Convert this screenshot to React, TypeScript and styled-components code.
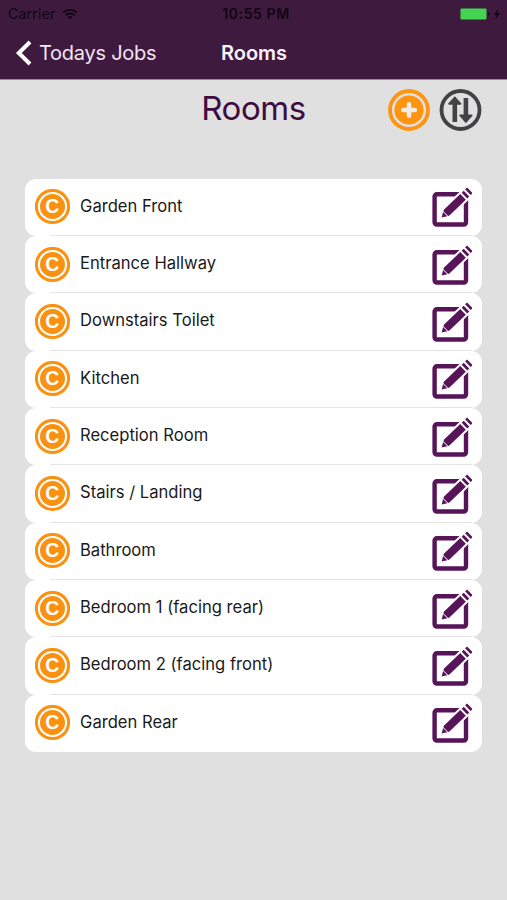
import React from 'react';
import styled, { createGlobalStyle } from 'styled-components';

const GlobalStyle = createGlobalStyle`
  * { box-sizing: border-box; }
  body { margin: 0; background: #e0e0e0; }
  svg { display: block; flex: none; }
`;

const Screen = styled.div`
  width: 507px;
  height: 900px;
  overflow: hidden;
  background: #e0e0e0;
  font-family: Inter, Roboto, sans-serif;
  color: #1a1a1a;
`;

const Header = styled.header`
  height: 80px;
  background: #3d1a3e;
  border-bottom: 1px solid #9a839c;
`;

const StatusBar = styled.div`
  display: grid;
  grid-template-columns: 1fr auto 1fr;
  align-items: center;
  height: 27px;
  padding: 0 5px 0 8px;
  color: #120614;
  font-size: 14px;
  line-height: 27px;
`;

const Carrier = styled.div`
  display: flex;
  align-items: center;
  gap: 6px;
  letter-spacing: 0.25px;
`;

const Clock = styled.div`
  font-weight: 600;
  letter-spacing: 0.6px;
  padding-left: 2px;
`;

const Power = styled.div`
  display: flex;
  justify-content: flex-end;
`;

const NavBar = styled.nav`
  display: grid;
  grid-template-columns: 1fr auto 1fr;
  align-items: center;
  height: 51px;
  padding: 0 15px;
  color: #f3e4f5;
`;

const Back = styled.div`
  display: flex;
  align-items: center;
  gap: 7px;
  font-size: 20px;
  letter-spacing: -0.25px;
  white-space: nowrap;
`;

const NavTitle = styled.div`
  padding-left: 1px;
  font-size: 20px;
  font-weight: 600;
  letter-spacing: 0;
  color: #fbf2fc;
`;

const Heading = styled.div`
  display: grid;
  grid-template-columns: 1fr auto 1fr;
  align-items: center;
  height: 60px;
  padding: 0 25px;
`;

const Title = styled.h1`
  grid-column: 2;
  margin: 0 0 5px;
  font-size: 33px;
  font-weight: 400;
  letter-spacing: -0.4px;
  line-height: 42px;
  color: #3f0b40;
`;

const Actions = styled.div`
  display: flex;
  justify-content: flex-end;
  gap: 9px;
`;

const List = styled.ul`
  margin: 38.6px 25px 0;
  padding: 0;
  list-style: none;
`;

const Row = styled.li`
  display: flex;
  align-items: center;
  height: 57.34px;
  padding: 0 10px 0 10px;
  border-radius: 11px;
  background:
    linear-gradient(#e4e4e4, #e4e4e4) 25px 100% / calc(100% - 35px) 1px no-repeat,
    #fff;
  &:last-child { background: #fff; }
`;

const Name = styled.span`
  flex: 1;
  padding: 0 0 3px 10px;
  font-size: 16.6px;
  line-height: 22px;
`;

const Wifi = () => (
  <svg width="16" height="12" viewBox="0 0 16 12" fill="none" stroke="#120614" strokeWidth="1.9">
    <path d="M1.2 4.6a9.8 9.8 0 0 1 13.6 0M3.7 7.2a6.2 6.2 0 0 1 8.6 0" />
    <path d="M8 11.6 5.5 9.1a3.6 3.6 0 0 1 5 0z" fill="#120614" stroke="none" />
  </svg>
);

const Battery = () => (
  <svg width="42" height="12" viewBox="0 0 42 12">
    <rect x="0.5" y="0.5" width="26" height="11" rx="1" fill="#43d552" />
    <path d="M28 4a2.4 2.4 0 0 1 0 4z" fill="#120614" />
    <path d="M38.5 0.8 33.6 6.8h3l-1.4 4.7 5-6.3h-3z" fill="#120614" />
  </svg>
);

const Chevron = () => (
  <svg width="17" height="26" viewBox="0 0 17 26">
    <path d="M15 2 3.8 13 15 24" fill="none" stroke="#fff" strokeWidth="4" />
  </svg>
);

const AddIcon = () => (
  <svg width="42" height="42" viewBox="0 0 42 42">
    <circle cx="21" cy="21" r="19" fill="none" stroke="#ff9410" strokeWidth="3.8" />
    <circle cx="21" cy="21" r="14.6" fill="#ff9410" />
    <path d="M21 15.2v11.6M15.2 21h11.6" stroke="#f3ece4" strokeWidth="4.6" strokeLinecap="round" />
  </svg>
);

const SortIcon = () => (
  <svg width="43" height="42" viewBox="0 0 43 42">
    <circle cx="21.5" cy="21" r="19" fill="none" stroke="#434345" strokeWidth="3.8" />
    <path
      d="M15.8 7.2 22.6 14.8 21.8 15.8H18.1V33h-4.6V15.8H9.8L9 14.8zM26.9 34.2l-6.8-7.6.8-1h3.7V9h4.6v16.6h3.7l.8 1z"
      fill="#434345"
    />
  </svg>
);

const RoomIcon = () => (
  <svg width="35" height="36" viewBox="0 0 35 36">
    <circle cx="17.5" cy="17.5" r="16.1" fill="none" stroke="#fb9111" strokeWidth="3" />
    <circle cx="17.5" cy="17.5" r="12.5" fill="#fb9111" />
    <text
      x="17.2"
      y="24.2"
      textAnchor="middle"
      fontFamily="Liberation Sans, sans-serif"
      fontWeight="700"
      fontSize="19.5"
      fill="#fff"
    >
      C
    </text>
  </svg>
);

const EditIcon = () => (
  <svg width="41" height="40" viewBox="0 0 41 40">
    <rect x="3.6" y="7.3" width="31.4" height="30.2" rx="2.2" fill="none" stroke="#581458" strokeWidth="4.4" />
    <g transform="translate(10.6 30.6) rotate(-44)">
      <path d="M8 -6H41V6H8z" fill="#fff" />
      <path d="M0 0 5 -3V3zM5.8 -3.4 7 -4H29.8V4H7L5.8 3.4zM31.8 -4h2.8v8h-2.8zM36.5 -4h2.8v8h-2.8z" fill="#581458" />
    </g>
  </svg>
);

const rooms = [
  'Garden Front',
  'Entrance Hallway',
  'Downstairs Toilet',
  'Kitchen',
  'Reception Room',
  'Stairs / Landing',
  'Bathroom',
  'Bedroom 1 (facing rear)',
  'Bedroom 2 (facing front)',
  'Garden Rear',
];

export default function App() {
  return (
    <>
      <GlobalStyle />
      <Screen>
        <Header>
          <StatusBar>
            <Carrier>
              Carrier
              <Wifi />
            </Carrier>
            <Clock>10:55 PM</Clock>
            <Power>
              <Battery />
            </Power>
          </StatusBar>
          <NavBar>
            <Back>
              <Chevron />
              Todays Jobs
            </Back>
            <NavTitle>Rooms</NavTitle>
          </NavBar>
        </Header>
        <Heading>
          <Title>Rooms</Title>
          <Actions>
            <AddIcon />
            <SortIcon />
          </Actions>
        </Heading>
        <List>
          {rooms.map((room) => (
            <Row key={room}>
              <RoomIcon />
              <Name>{room}</Name>
              <EditIcon />
            </Row>
          ))}
        </List>
      </Screen>
    </>
  );
}
